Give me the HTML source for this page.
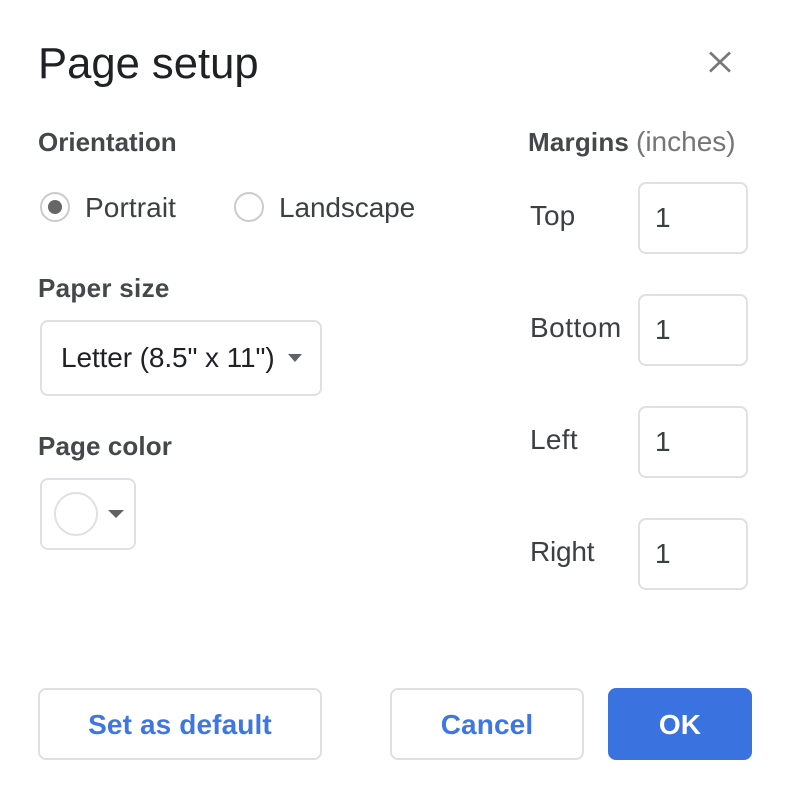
<!DOCTYPE html>
<html><head><meta charset="utf-8"><style>
html,body{margin:0;padding:0;background:#fff}
body{width:788px;height:798px;position:relative;overflow:hidden;font-family:"Liberation Sans",sans-serif}
.t{position:absolute;white-space:nowrap;line-height:1;color:#3c4043}
.b{font-weight:bold;font-size:26px;color:#44484b}
.n{font-size:28px}
.box{position:absolute;box-sizing:border-box;border:2px solid #dfe0e4;border-radius:8px;background:#fff}
.btn{font-weight:bold;font-size:28px;color:#3f77e2;text-align:center;letter-spacing:.12px}
.tri{position:absolute;width:0;height:0;border-style:solid;border-color:#5f6368 transparent transparent transparent}
.r{position:absolute;box-sizing:border-box;width:30px;height:30px;border:2px solid #cbcbcb;border-radius:50%}
</style></head><body>
<div class="t" style="left:38px;top:43px;font-size:43.6px;color:#202124">Page setup</div>
<svg style="position:absolute;left:704px;top:46px" width="32" height="32"><path d="M6 6.500L26 25.500M26 6.500L6 25.500" stroke="#777" stroke-width="2.6" fill="none"/></svg>

<div class="t b" style="left:38px;top:129px">Orientation</div>
<div class="r" style="left:40px;top:192px"></div>
<div style="position:absolute;left:48px;top:200px;width:14px;height:14px;border-radius:50%;background:#666"></div>
<div class="t n" style="left:85px;top:194px;letter-spacing:.1px">Portrait</div>
<div class="r" style="left:234px;top:192px"></div>
<div class="t n" style="left:279px;top:194px;letter-spacing:-.1px">Landscape</div>

<div class="t b" style="left:38px;top:275px;letter-spacing:.3px">Paper size</div>
<div class="box" style="left:40px;top:320px;width:282px;height:76px"></div>
<div class="t n" style="left:61px;top:344px;color:#202124;letter-spacing:-.1px">Letter (8.5" x 11")</div>
<div class="tri" style="left:288px;top:354px;border-width:8px 7px 0 7px"></div>

<div class="t b" style="left:38px;top:433px;letter-spacing:.1px">Page color</div>
<div class="box" style="left:40px;top:478px;width:96px;height:72px"></div>
<div style="position:absolute;left:54px;top:492px;width:44px;height:44px;box-sizing:border-box;border:2px solid #dfe0e4;border-radius:50%"></div>
<div class="tri" style="left:108px;top:510px;border-width:8px 8px 0 8px"></div>

<div class="t b" style="left:528px;top:129px;letter-spacing:.2px">Margins</div>
<div class="t n" style="left:636px;top:128px;color:#757575">(inches)</div>

<div class="t n" style="left:530px;top:202px">Top</div>
<div class="box" style="left:638px;top:182px;width:110px;height:72px"></div>
<div class="t n" style="left:655px;top:204px">1</div>
<div class="t n" style="left:530px;top:314px;letter-spacing:.5px">Bottom</div>
<div class="box" style="left:638px;top:294px;width:110px;height:72px"></div>
<div class="t n" style="left:655px;top:316px">1</div>
<div class="t n" style="left:530px;top:426px;letter-spacing:.3px">Left</div>
<div class="box" style="left:638px;top:406px;width:110px;height:72px"></div>
<div class="t n" style="left:655px;top:428px">1</div>
<div class="t n" style="left:530px;top:538px;letter-spacing:-.2px">Right</div>
<div class="box" style="left:638px;top:518px;width:110px;height:72px"></div>
<div class="t n" style="left:655px;top:540px">1</div>

<div class="box btn" style="left:38px;top:688px;width:284px;height:72px;line-height:70px">Set as default</div>
<div class="box btn" style="left:390px;top:688px;width:194px;height:72px;line-height:70px">Cancel</div>
<div class="box btn" style="left:608px;top:688px;width:144px;height:72px;line-height:70px;background:#3a72e0;border-color:#3a72e0;color:#fff">OK</div>
</body></html>
